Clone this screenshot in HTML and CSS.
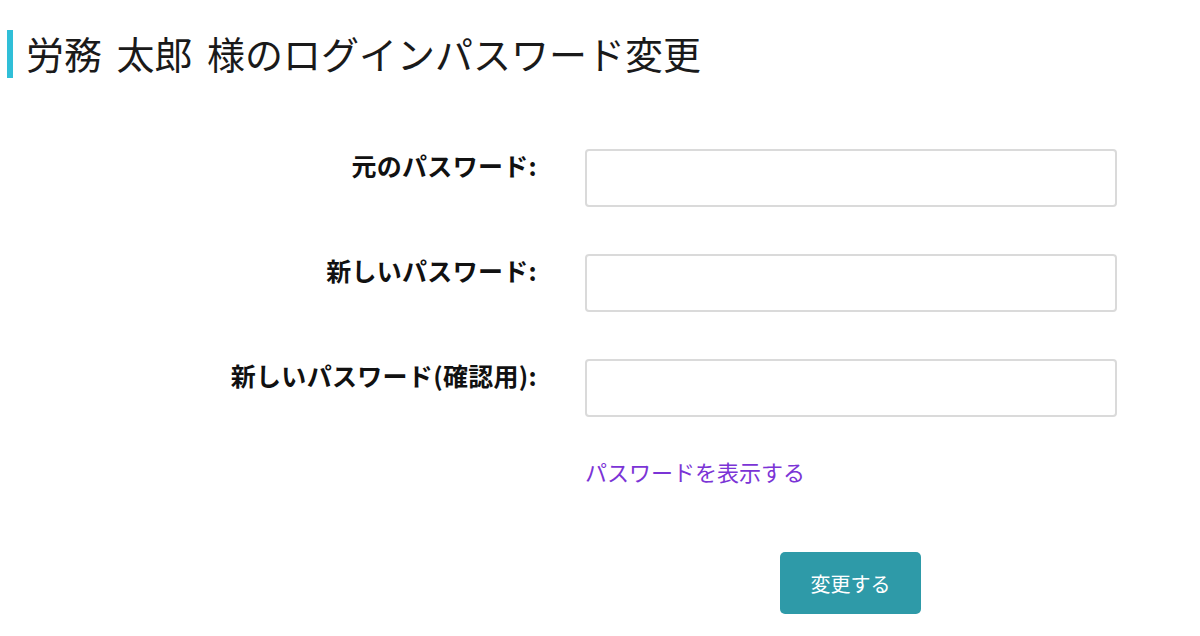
FILE: index.html
```html
<!DOCTYPE html>
<html lang="ja">
<head>
<meta charset="utf-8">
<title>ログインパスワード変更</title>
<link rel="stylesheet" href="styles.css">
</head>
<body>
<div class="page">
  <h1 class="title">労務 太郎 様のログインパスワード変更</h1>
  <form class="form">
    <div class="row">
      <label class="label" for="old">元のパスワード:</label>
      <input class="input" id="old" type="password">
    </div>
    <div class="row">
      <label class="label" for="new">新しいパスワード:</label>
      <input class="input" id="new" type="password">
    </div>
    <div class="row">
      <label class="label" for="confirm">新しいパスワード(確認用):</label>
      <input class="input" id="confirm" type="password">
    </div>
    <div class="row link-row">
      <span></span>
      <a class="show-link" href="#">パスワードを表示する</a>
    </div>
    <div class="actions">
      <button class="submit" type="button">変更する</button>
    </div>
  </form>
</div>
</body>
</html>
```

FILE: styles.css
```css
html, body {
  margin: 0;
  padding: 0;
  background: #ffffff;
}
body {
  font-family: "Noto Sans CJK JP", "Noto Sans", sans-serif;
  color: #1a1a1a;
}
.page {
  padding-top: 30px;
}
.title {
  margin: 0 0 0 7px;
  border-left: 6px solid #30bfd8;
  padding-left: 13px;
  height: 48px;
  line-height: 46px;
  font-size: 38px;
  word-spacing: 6px;
  font-weight: 400;
  color: #1a1a1a;
}
.form {
  margin-top: 71px;
  display: flex;
  flex-direction: column;
}
.row {
  display: grid;
  grid-template-columns: 537px 532px;
  column-gap: 48px;
  align-items: start;
  margin-bottom: 47px;
}
.label {
  text-align: right;
  font-size: 25px;
  letter-spacing: 0.3px;
  font-weight: 700;
  line-height: 30px;
  padding-top: 1px;
  color: #111;
}
.input {
  box-sizing: border-box;
  height: 58px;
  width: 532px;
  margin: 0;
  border: 2px solid #dadada;
  border-radius: 4px;
  background: #fff;
}
.link-row {
  margin-top: -8px;
  margin-bottom: 0;
}
.show-link {
  font-size: 22px;
  line-height: 30px;
  color: #7b34d6;
  text-decoration: none;
}
.actions {
  display: flex;
  justify-content: flex-start;
  padding-left: 780px;
  margin-top: 66px;
}
.submit {
  width: 141px;
  height: 62px;
  border: none;
  border-radius: 5px;
  background: #2e9aa8;
  color: #ffffff;
  font-family: "Noto Sans CJK JP", "Noto Sans", sans-serif;
  font-size: 20px;
  cursor: pointer;
}
```
